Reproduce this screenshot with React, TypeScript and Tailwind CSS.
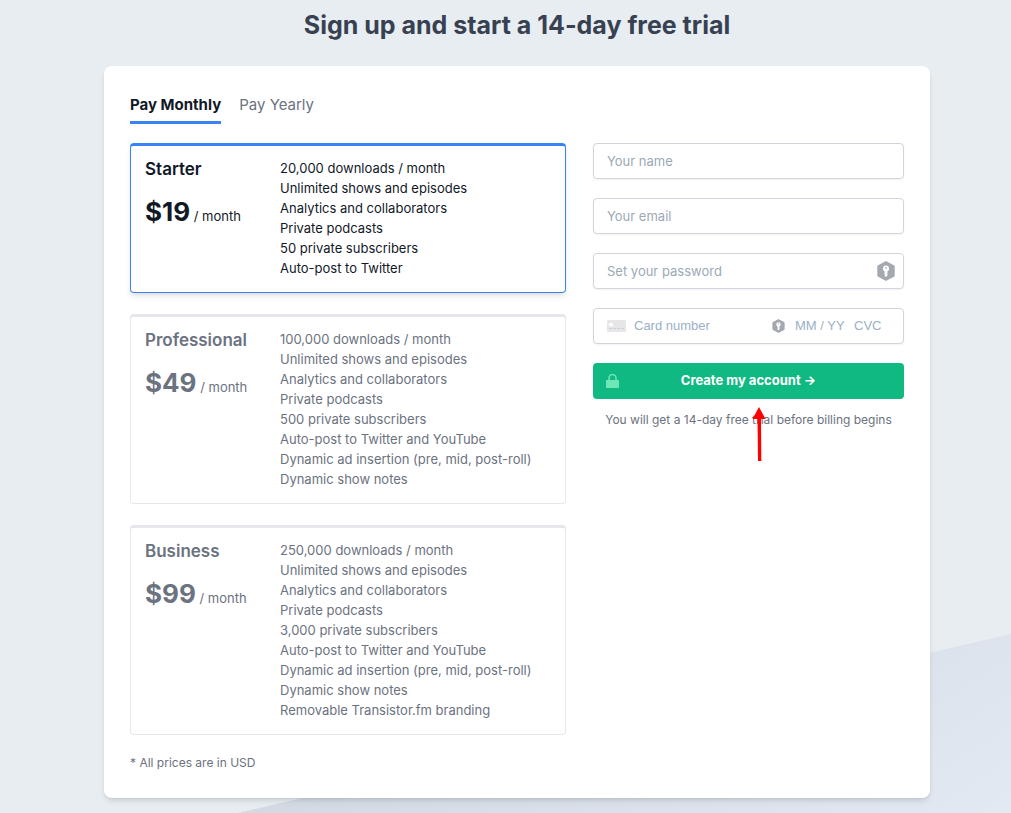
import React from "react";

type Plan = { name: string; price: string; features: string[] };

const plans: Plan[] = [
  {
    name: "Starter",
    price: "$19",
    features: [
      "20,000 downloads / month",
      "Unlimited shows and episodes",
      "Analytics and collaborators",
      "Private podcasts",
      "50 private subscribers",
      "Auto-post to Twitter",
    ],
  },
  {
    name: "Professional",
    price: "$49",
    features: [
      "100,000 downloads / month",
      "Unlimited shows and episodes",
      "Analytics and collaborators",
      "Private podcasts",
      "500 private subscribers",
      "Auto-post to Twitter and YouTube",
      "Dynamic ad insertion (pre, mid, post-roll)",
      "Dynamic show notes",
    ],
  },
  {
    name: "Business",
    price: "$99",
    features: [
      "250,000 downloads / month",
      "Unlimited shows and episodes",
      "Analytics and collaborators",
      "Private podcasts",
      "3,000 private subscribers",
      "Auto-post to Twitter and YouTube",
      "Dynamic ad insertion (pre, mid, post-roll)",
      "Dynamic show notes",
      "Removable Transistor.fm branding",
    ],
  },
];

function KeyBadge({ className }: { className: string }) {
  return (
    <svg viewBox="0 0 18 20" className={className} aria-hidden="true">
      <path d="M9 .8 17 5v10l-8 4.2L1 15V5z" fill="#a4a8b1" stroke="#a4a8b1" strokeWidth="1.4" strokeLinejoin="round" />
      <path d="M9 4.6a3.1 3.1 0 0 0-1.4 5.9v4.3L9 16l1.4-1.2v-4.3A3.1 3.1 0 0 0 9 4.6z" fill="#fff" />
      <circle cx="9" cy="6.9" r=".8" fill="#a4a8b1" />
    </svg>
  );
}

function PlanCard({ plan, selected, onSelect }: { plan: Plan; selected: boolean; onSelect: () => void }) {
  return (
    <button
      type="button"
      aria-pressed={selected}
      onClick={onSelect}
      className={
        selected
          ? "flex w-full items-start rounded border border-t-3 border-[#3b82f6] px-3.5 pt-3 pb-3.5 text-left text-[#111827] shadow-md"
          : "flex w-full items-start rounded border border-t-3 border-[#e5e7eb] px-3.5 pt-3 pb-3.5 text-left text-[#6b7280]"
      }
    >
      <span className="block w-[135px] shrink-0">
        <span className="block text-[17px] leading-[22px] font-semibold">{plan.name}</span>
        <span className="mt-3.5 block leading-9">
          <span className="text-[26px] font-bold">{plan.price}</span>
          <span className="text-[13px]"> / month</span>
        </span>
      </span>
      <span className="block text-[13px] leading-5">
        {plan.features.map((f) => (
          <span key={f} className="block">{f}</span>
        ))}
      </span>
    </button>
  );
}

const field =
  "block h-9 w-full rounded border border-[#d1d5db] bg-white px-[13px] text-[13px] shadow-xs placeholder:text-[#9ca9b5]";

export default function App() {
  const [selected, setSelected] = React.useState("Starter");
  const [yearly, setYearly] = React.useState(false);
  const activeTab = "border-b-3 border-[#3b82f6] pb-[5px] font-bold text-[#111827]";
  const idleTab = "border-b-3 border-transparent pb-[5px] text-[#6b7280]";

  return (
    <div className="relative isolate min-h-screen overflow-hidden bg-[#e8edf1] pb-[15px] pl-[23px] font-['Inter',sans-serif]">
      <svg
        className="absolute inset-x-0 bottom-0 -z-10 h-[180px] w-full"
        viewBox="0 0 1011 180"
        preserveAspectRatio="none"
        aria-hidden="true"
      >
        <defs>
          <linearGradient id="slope" gradientUnits="userSpaceOnUse" x1="300" y1="167" x2="520" y2="500">
            <stop offset="0" stopColor="#d3dae4" />
            <stop offset="0.58" stopColor="#dde3ec" />
            <stop offset="1" stopColor="#e3e9f1" />
          </linearGradient>
        </defs>
        <path d="M238 180 1011 1v179z" fill="url(#slope)" />
      </svg>

      <main className="mx-auto max-w-[826px]">
        <h1 className="pt-[7px] text-center text-[25px] leading-9 font-bold text-[#374151]">
          Sign up and start a 14-day free trial
        </h1>

        <div className="mt-[23px] rounded-lg bg-white px-[26px] pt-7 pb-[25px] shadow-md">
          <div className="flex gap-[18px] text-[15px] leading-[22px]">
            <button type="button" aria-pressed={!yearly} className={yearly ? idleTab : activeTab} onClick={() => setYearly(false)}>
              Pay Monthly
            </button>
            <button type="button" aria-pressed={yearly} className={yearly ? activeTab : idleTab} onClick={() => setYearly(true)}>
              Pay Yearly
            </button>
          </div>

          <div className="mt-[19px] flex items-start gap-[27px]">
            <section className="min-w-0 flex-[436]">
              <div className="flex flex-col gap-[21px]">
                {plans.map((p) => (
                  <PlanCard key={p.name} plan={p} selected={selected === p.name} onSelect={() => setSelected(p.name)} />
                ))}
              </div>
              <p className="mt-[18px] text-xs leading-5 text-[#6b7280]">* All prices are in USD</p>
            </section>

            <form className="flex min-w-0 flex-[311] flex-col gap-[19px]" onSubmit={(e) => e.preventDefault()}>
              <input type="text" aria-label="Your name" placeholder="Your name" className={field} />
              <input type="email" aria-label="Your email" placeholder="Your email" className={field} />
              <div className="relative">
                <input type="password" aria-label="Set your password" placeholder="Set your password" className={field} />
                <KeyBadge className="absolute top-2 right-[9px] h-5 w-[18px]" />
              </div>
              <div className="flex h-9 items-center rounded border border-[#d1d5db] bg-white px-[13px] font-['Liberation_Sans',sans-serif] text-[13px] shadow-xs">
                <svg viewBox="0 0 19 12" className="mr-2 h-3 w-[19px] shrink-0" aria-hidden="true">
                  <rect width="19" height="12" rx="1.5" fill="#e6e6e6" />
                  <rect x="2" y="3" width="4" height="3" rx=".5" fill="#fff" />
                  <path d="M2 8.5h15" stroke="#c9d2de" strokeDasharray="3 1" />
                </svg>
                <input aria-label="Card number" placeholder="Card number" className="min-w-0 flex-1 placeholder:text-[#9ab0c6]" />
                <KeyBadge className="mr-2.5 h-3.5 w-[13px] shrink-0" />
                <input aria-label="Expiry date" placeholder="MM / YY" className="w-[59px] placeholder:text-[#9ab0c6]" />
                <input aria-label="CVC" placeholder="CVC" className="w-9 placeholder:text-[#9ab0c6]" />
              </div>
              <div className="relative">
                <button
                  type="submit"
                  className="relative flex h-9 w-full items-center justify-center rounded bg-[#10b981] text-[13px] font-bold text-white"
                >
                  <svg viewBox="0 0 13 14" className="absolute left-[13px] h-3.5 w-[13px]" aria-hidden="true">
                    <path d="M3 7V4a3.5 3.5 0 0 1 7 0v3" fill="none" stroke="#6ee7b7" strokeWidth="1.5" />
                    <rect y="6" width="13" height="8" rx="1" fill="#6ee7b7" />
                  </svg>
                  Create my account →
                </button>
                <p className="mt-[11px] text-center text-xs leading-5 text-[#6b7280]">
                  You will get a 14-day free trial before billing begins
                </p>
                <svg viewBox="0 0 14 54" className="absolute top-11 left-[159px] h-[54px] w-3.5" aria-hidden="true">
                  <path d="M7 0 13.5 12H9l.3 42H6L5.5 12H.5z" fill="#f00" />
                </svg>
              </div>
            </form>
          </div>
        </div>
      </main>
    </div>
  );
}
